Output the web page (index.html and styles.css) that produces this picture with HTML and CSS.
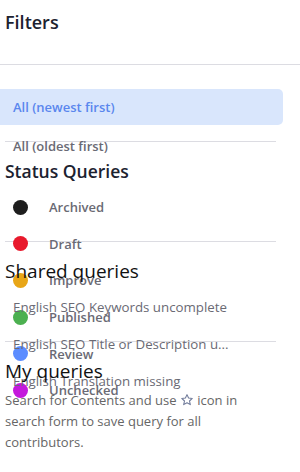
FILE: index.html
```html
<!DOCTYPE html>
<html lang="en">
<head>
<meta charset="UTF-8">
<meta name="viewport" content="width=device-width, initial-scale=1.0">
<title>Filters</title>

<link rel="stylesheet" href="styles.css">
</head>
<body>

<aside class="filters">
    <header class="filters-head">
        <h2>Filters</h2>
    </header>

    <ul class="sort-list">
        <li class="active">All (newest first)</li>
        <li>All (oldest first)</li>
    </ul>

    <section class="query-group">
        <h3>Status Queries</h3>
        <ul class="status-list">
            <li><span class="dot archived"></span>Archived</li>
            <li><span class="dot draft"></span>Draft</li>
            <li><span class="dot improve"></span>Improve</li>
            <li><span class="dot published"></span>Published</li>
            <li><span class="dot review"></span>Review</li>
            <li><span class="dot unchecked"></span>Unchecked</li>
        </ul>
    </section>

    <section class="query-group">
        <h3 class="plain">Shared queries</h3>
        <ul class="shared-list">
            <li>English SEO Keywords uncomplete</li>
            <li>English SEO Title or Description u...</li>
            <li>English Translation missing</li>
        </ul>
    </section>

    <section class="query-group last">
        <h3 class="plain">My queries</h3>
        <p class="hint">Search for Contents and use <svg class="star" viewBox="0 0 24 24"><path d="M12 2.8l2.7 5.9 6.4.7-4.8 4.3 1.4 6.3L12 16.8 6.3 20l1.4-6.3-4.8-4.3 6.4-.7z"/></svg> icon in search form to save query for all contributors.</p>
    </section>
</aside>

</body>
</html>
```

FILE: styles.css
```css
body {
    margin: 0;
    font-family: "Open Sans", "Noto Sans", sans-serif;
    background-color: #fff;
    color: #6a6a74;
}

.filters {
    width: 300px;
    min-height: 472px;
}

.filters-head {
    height: 64px;
    border-bottom: 1px solid #dcdce2;
}

.filters-head h2 {
    margin: 0;
    padding: 8px 5px;
    font-size: 18px;
    line-height: 28px;
    font-weight: 600;
    color: #1c2230;
}

ul {
    list-style-type: none;
    margin: 0;
    padding: 0;
}

.sort-list {
    height: 76px;
    padding-top: 24px;
    box-sizing: border-box;
}

.sort-list li {
    height: 36px;
    line-height: 36px;
    padding-left: 13px;
    margin: 0 17px 3px 0;
    font-size: 13px;
    font-weight: 600;
}

.sort-list li.active {
    background-color: #d9e6fc;
    color: #5a86ee;
    border-radius: 0 5px 5px 0;
}

.query-group {
    height: 100px;
    margin: 0 24px 0 5px;
    border-top: 1px solid #dcdce2;
    box-sizing: border-box;
}

.query-group h3 {
    margin: 17px 0 0;
    font-size: 17.5px;
    line-height: 24px;
    font-weight: 600;
    color: #1c2230;
}

.query-group h3.plain {
    font-size: 19px;
    font-weight: 400;
    color: #111;
}

.status-list {
    margin-top: 6px;
}

.status-list li {
    display: flex;
    align-items: center;
    height: 36.6px;
    padding-left: 8px;
    font-size: 13px;
    font-weight: 600;
}

.dot {
    width: 15px;
    height: 15px;
    margin-right: 21px;
    border-radius: 50%;
}

.archived { background-color: #1e1e1e; }
.draft { background-color: #e8192c; }
.improve { background-color: #e8a617; }
.published { background-color: #4cb050; }
.review { background-color: #5b8cff; }
.unchecked { background-color: #c418dc; }

.shared-list {
    margin-top: 6px;
}

.shared-list li {
    height: 37px;
    line-height: 37px;
    padding-left: 8px;
    font-size: 13.3px;
    white-space: nowrap;
}

.hint {
    margin: 7px 0 0;
    font-size: 13px;
    line-height: 21px;
    color: #666;
}

.star {
    width: 14px;
    height: 14px;
    vertical-align: -2px;
    fill: none;
    stroke: #6f7a99;
    stroke-width: 1.8;
    stroke-linejoin: round;
}
```
